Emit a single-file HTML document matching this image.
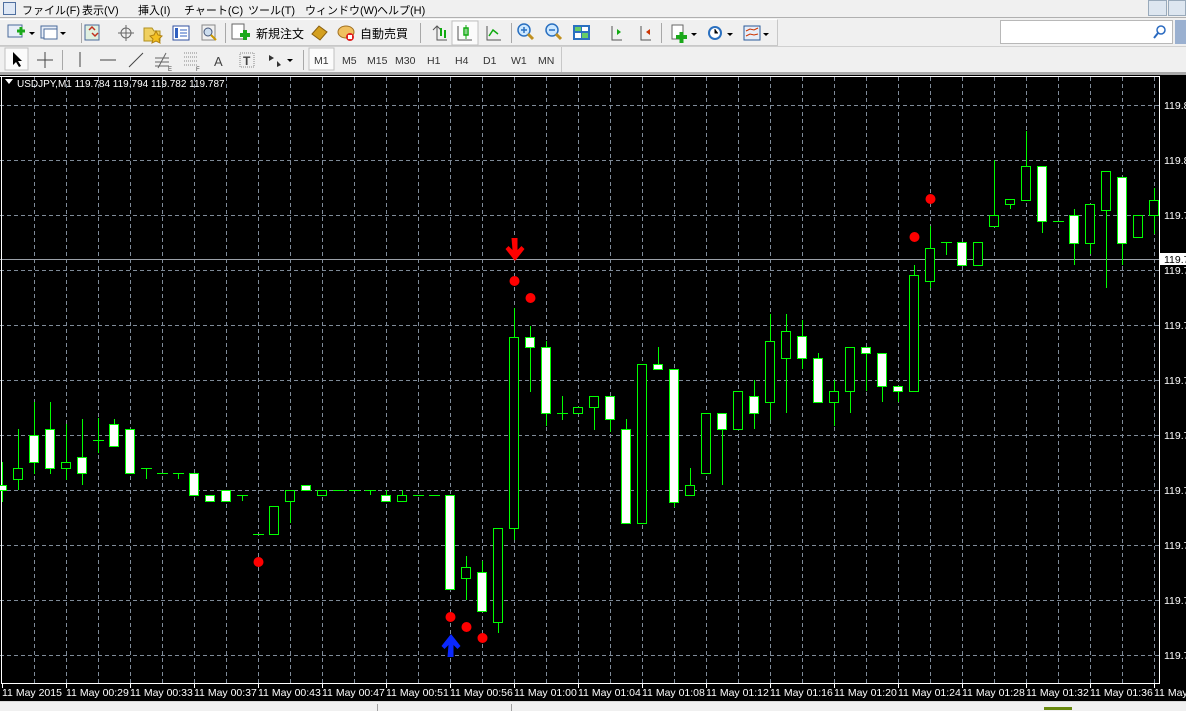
<!DOCTYPE html>
<html><head><meta charset="utf-8"><style>
*{margin:0;padding:0;box-sizing:border-box}
body{width:1186px;height:711px;overflow:hidden;background:#f0f0f0;font-family:"Liberation Sans","Noto Sans CJK JP",sans-serif;position:relative}
.menu{position:absolute;top:0;left:0;width:1186px;height:18px;font-size:11px;color:#000;border-bottom:1px solid #b0b0b0}
.menu span{position:absolute;top:2px;white-space:nowrap}
.tb{position:absolute;left:0;height:26px;border-top:1px solid #fff;border-bottom:1px solid #c8c8c8}
.sep{position:absolute;width:1px;background:#a8a8a8;height:20px}
.t{position:absolute;font-size:11px;color:#222}
</style></head><body>
<div class="menu">
<div style="position:absolute;left:3px;top:2px;width:13px;height:13px;border:1px solid #5070a0;background:#dfe8f5"></div>
<span style="left:22px">ファイル(F)</span><span style="left:82px">表示(V)</span><span style="left:138px">挿入(I)</span><span style="left:184px">チャート(C)</span><span style="left:248px">ツール(T)</span><span style="left:305px">ウィンドウ(W)</span><span style="left:377px">ヘルプ(H)</span>
<div style="position:absolute;left:1148px;top:0;width:19px;height:16px;border:1px solid #9ab;background:#dde6f0"></div>
<div style="position:absolute;left:1168px;top:0;width:18px;height:16px;border:1px solid #9ab;background:#dde6f0"></div>
</div>
<div class="tb" style="top:19px;width:778px;height:27px;border-right:1px solid #c8c8c8"></div>
<div class="tb" style="top:46px;width:562px;height:27px;border-right:1px solid #c8c8c8"></div>
<svg width="1186" height="75" style="position:absolute;left:0;top:0">
<rect x="8" y="25" width="14" height="12" fill="#e8eef8" stroke="#4a6a9a"/><path d="M17 31h8M21 27v8" stroke="#1aa81a" stroke-width="3"/><path d="M29 32l3 3 3-3z" fill="#000"/>
<rect x="41" y="26" width="16" height="12" fill="#e8eef8" stroke="#4a6a9a"/><rect x="44" y="29" width="13" height="10" fill="#fff" stroke="#4a6a9a"/><path d="M60 32l3 3 3-3z" fill="#000"/>
<rect x="85" y="25" width="14" height="15" fill="#e0f0e0" stroke="#4a6a9a"/><path d="M89 30l3-3 3 3M92 33l3 3 3-3" stroke="#c03020" stroke-width="1.5" fill="none"/>
<circle cx="126" cy="33" r="5" fill="none" stroke="#666"/><path d="M126 25v16M118 33h16" stroke="#666"/>
<path d="M144 28h8l2 3h6v10h-16z" fill="#f0d060" stroke="#b09020"/><path d="M156 31l2 4 4 1-3 3 1 4-4-2-4 2 1-4-3-3 4-1z" fill="#f4c020" stroke="#b08010"/>
<rect x="173" y="26" width="16" height="14" fill="#fff" stroke="#3050a0"/><rect x="175" y="28" width="3" height="10" fill="#3060c0"/><path d="M180 30h7M180 33h7M180 36h7" stroke="#3060c0"/>
<rect x="202" y="25" width="13" height="15" fill="#f0f0f0" stroke="#888"/><circle cx="208" cy="32" r="4" fill="#cde" stroke="#457"/><path d="M211 35l5 5" stroke="#c90" stroke-width="2"/>
<rect x="232" y="24" width="12" height="15" fill="#fff" stroke="#666"/><path d="M240 35h10M245 30v10" stroke="#1aa81a" stroke-width="4"/>
<path d="M312 34l7-8 8 6-7 8z" fill="#d4a020" stroke="#8a6010"/>
<ellipse cx="346" cy="32" rx="8" ry="6" fill="#f0c060" stroke="#a07020"/><circle cx="350" cy="37" r="4" fill="#e02020"/><rect x="348" y="35" width="4" height="4" fill="#fff"/>
<path d="M437 26v14h10M433 30l4-4 4 4" stroke="#555" fill="none"/><path d="M441 28v8M445 30v8" stroke="#1a1" stroke-width="2"/>
<rect x="452" y="21" width="26" height="24" fill="#fbfbfb" stroke="#c0c0c0"/><path d="M458 26v14h14" stroke="#555" fill="none"/><rect x="464" y="28" width="4" height="7" fill="none" stroke="#1a1" stroke-width="1.5"/><path d="M466 25v14" stroke="#1a1"/>
<path d="M487 26v14h14" stroke="#555" fill="none"/><path d="M489 36l4-6 5 4" stroke="#1a1" fill="none" stroke-width="1.5"/>
<circle cx="524" cy="30" r="6" fill="#cde8ff" stroke="#2a70c0" stroke-width="1.5"/><path d="M521 30h6M524 27v6" stroke="#2a70c0" stroke-width="1.5"/><path d="M528 34l5 5" stroke="#c09020" stroke-width="3"/>
<circle cx="552" cy="30" r="6" fill="#cde8ff" stroke="#2a70c0" stroke-width="1.5"/><path d="M549 30h6" stroke="#2a70c0" stroke-width="1.5"/><path d="M556 34l5 5" stroke="#c09020" stroke-width="3"/>
<rect x="573" y="25" width="17" height="15" fill="#2a70c0"/><rect x="575" y="27" width="6" height="4" fill="#6c6"/><rect x="582" y="27" width="6" height="4" fill="#fff"/><rect x="575" y="33" width="6" height="5" fill="#fff"/><rect x="582" y="33" width="6" height="5" fill="#6c6"/>
<path d="M612 26v14h10" stroke="#555" fill="none"/><path d="M617 29v6l4-3z" fill="#1a1"/>
<path d="M641 26v14h10" stroke="#555" fill="none"/><path d="M650 29v6l-4-3z" fill="#c30"/>
<rect x="672" y="25" width="11" height="14" fill="#fff" stroke="#666"/><path d="M676 37h11M681.5 32v11" stroke="#1aa81a" stroke-width="4"/><path d="M691 33l3 3 3-3z" fill="#000"/>
<circle cx="715" cy="33" r="7" fill="#2a70c0"/><circle cx="715" cy="33" r="5" fill="#fff"/><path d="M715 29v4h3" stroke="#000"/><path d="M727 33l3 3 3-3z" fill="#000"/>
<rect x="744" y="26" width="16" height="14" fill="#e8eef8" stroke="#2a5a9a"/><path d="M746 31l4-2 4 1 4-2M746 36l4-2 4 1 4-1" stroke="#c30" fill="none"/><path d="M763 33l3 3 3-3z" fill="#000"/>
<rect x="5" y="48" width="23" height="22" fill="#fbfbfb" stroke="#c0c0c0"/><path d="M13 52v13l3-3 3 5 2-1-3-5h4z" fill="#000"/>
<path d="M45 52v16M37 60h16" stroke="#444"/>
<path d="M80 52v15" stroke="#444"/><path d="M100 60h16" stroke="#444"/><path d="M129 67l14-14" stroke="#444"/>
<path d="M155 58h14M155 62h14M155 66h14M158 68l8-15" stroke="#666"/><text x="168" y="71" font-size="6" fill="#444">E</text>
<path d="M184 53h14M184 57h14M184 61h14M184 65h14" stroke="#888" stroke-dasharray="1 1"/><text x="196" y="71" font-size="6" fill="#444">F</text>
<text x="214" y="66" font-size="13" fill="#444">A</text>
<rect x="240" y="53" width="14" height="14" fill="none" stroke="#888" stroke-dasharray="1 1"/><text x="243" y="65" font-size="12" font-weight="bold" fill="#444">T</text>
<path d="M269 55l5 3-5 3zM277 61l4 4-4 2z" fill="#333"/><path d="M287 59l3 3 3-3z" fill="#000"/>
<rect x="309" y="48" width="25" height="22" fill="#fbfbfb" stroke="#c0c0c0"/>
<text font-size="10.5" fill="#333" y="64"><tspan x="314">M1</tspan><tspan x="342">M5</tspan><tspan x="367">M15</tspan><tspan x="395">M30</tspan><tspan x="427">H1</tspan><tspan x="455">H4</tspan><tspan x="483">D1</tspan><tspan x="511">W1</tspan><tspan x="538">MN</tspan></text>
</svg>
<div class="sep" style="left:81px;top:23px"></div><div class="sep" style="left:225px;top:23px"></div><div class="sep" style="left:420px;top:23px"></div><div class="sep" style="left:511px;top:23px"></div><div class="sep" style="left:661px;top:23px"></div>
<div class="sep" style="left:62px;top:50px"></div><div class="sep" style="left:303px;top:50px"></div>
<div style="position:absolute;top:46px;left:0;width:1186px;height:1px;background:#d0d0d0"></div>
<div class="t" style="left:256px;top:25px;font-size:12px;color:#000">新規注文</div>
<div class="t" style="left:360px;top:25px;font-size:12px;color:#000">自動売買</div>
<div style="position:absolute;left:1000px;top:20px;width:173px;height:24px;background:#fff;border:1px solid #b8b8b8"></div>
<svg width="14" height="14" style="position:absolute;left:1153px;top:25px"><circle cx="8" cy="5" r="4" fill="none" stroke="#2a6ac0" stroke-width="1.5"/><path d="M5 8l-4 5" stroke="#2a6ac0" stroke-width="2"/></svg>
<div style="position:absolute;left:1175px;top:20px;width:11px;height:24px;background:#9ab0d0"></div>
<div style="position:absolute;top:72px;left:0;width:1186px;height:3px;background:#a8a8a8"></div>

<svg width="1186" height="626" viewBox="0 75 1186 626" style="position:absolute;left:0;top:75px;background:#000;font-family:'Liberation Sans',sans-serif">
<g stroke="#7f8b99" stroke-dasharray="4 3">
<path d="M0 105.5H1159M0 160.5H1159M0 215.5H1159M0 270.5H1159M0 325.5H1159M0 380.5H1159M0 435.5H1159M0 490.5H1159M0 545.5H1159M0 600.5H1159M0 655.5H1159"/>
<path d="M34.5 77V683M66.5 77V683M98.5 77V683M130.5 77V683M162.5 77V683M194.5 77V683M226.5 77V683M258.5 77V683M290.5 77V683M322.5 77V683M354.5 77V683M386.5 77V683M418.5 77V683M450.5 77V683M482.5 77V683M514.5 77V683M546.5 77V683M578.5 77V683M610.5 77V683M642.5 77V683M674.5 77V683M706.5 77V683M738.5 77V683M770.5 77V683M802.5 77V683M834.5 77V683M866.5 77V683M898.5 77V683M930.5 77V683M962.5 77V683M994.5 77V683M1026.5 77V683M1058.5 77V683M1090.5 77V683M1122.5 77V683M1154.5 77V683"/>
</g>
<path d="M0 259.5H1159" stroke="#9aa0a8"/>
<path d="M0 76.5H1159.5V683.5H1.5V76" stroke="#fff" fill="none"/>
<path d="M2.5 683v5M66.5 683v5M130.5 683v5M194.5 683v5M258.5 683v5M322.5 683v5M386.5 683v5M450.5 683v5M514.5 683v5M578.5 683v5M642.5 683v5M706.5 683v5M770.5 683v5M834.5 683v5M898.5 683v5M962.5 683v5M1026.5 683v5M1090.5 683v5M1154.5 683v5M1159 105.5h4M1159 160.5h4M1159 215.5h4M1159 270.5h4M1159 325.5h4M1159 380.5h4M1159 435.5h4M1159 490.5h4M1159 545.5h4M1159 600.5h4M1159 655.5h4" stroke="#fff"/>
<g stroke="#00ff00" fill="none">
<path d="M2.5 462V502M18.5 429V490M34.5 402V474M50.5 402V474M66.5 424V480M82.5 419V485M98.5 418V453M114.5 419V446M130.5 429V474M146.5 468V479M178.5 473V479M242.5 495V501M290.5 490V523M370.5 490V495M386.5 490V501M402.5 490V501M466.5 556V600M482.5 561V611M498.5 528V633M514.5 308V540M530.5 326V392M546.5 341V426M562.5 396V420M594.5 396V430M610.5 396V432M626.5 419V523M658.5 347V369M674.5 369V507M690.5 468V495M722.5 413V485M754.5 380V429M770.5 314V420M786.5 314V413M802.5 320V369M818.5 353V402M834.5 380V426M850.5 347V413M866.5 347V391M882.5 353V402M898.5 386V402M914.5 265V391M930.5 226V288M946.5 242V255M994.5 160V226M1010.5 199V209M1026.5 131V200M1042.5 166V233M1074.5 209V265M1090.5 204V254M1106.5 171V288M1122.5 177V265M1154.5 188V234"/>
<path d="M93 440.5h11M141 468.5h11M157 473.5h11M173 473.5h11M237 495.5h11M253 534.5h11M333 490.5h11M349 490.5h11M365 490.5h11M413 495.5h11M429 495.5h11M557 413.5h11M941 242.5h11M1053 221.5h11"/>
</g>
<g stroke="#00ff00" fill="#fff">
<rect x="-2.5" y="485.5" width="9" height="5"/><rect x="29.5" y="435.5" width="9" height="27"/><rect x="45.5" y="429.5" width="9" height="39"/><rect x="77.5" y="457.5" width="9" height="16"/><rect x="109.5" y="424.5" width="9" height="22"/><rect x="125.5" y="429.5" width="9" height="44"/><rect x="189.5" y="473.5" width="9" height="22"/><rect x="205.5" y="495.5" width="9" height="6"/><rect x="221.5" y="490.5" width="9" height="11"/><rect x="301.5" y="485.5" width="9" height="5"/><rect x="381.5" y="495.5" width="9" height="6"/><rect x="445.5" y="495.5" width="9" height="94"/><rect x="477.5" y="572.5" width="9" height="39"/><rect x="525.5" y="337.5" width="9" height="10"/><rect x="541.5" y="347.5" width="9" height="66"/><rect x="605.5" y="396.5" width="9" height="23"/><rect x="621.5" y="429.5" width="9" height="94"/><rect x="653.5" y="364.5" width="9" height="5"/><rect x="669.5" y="369.5" width="9" height="133"/><rect x="717.5" y="413.5" width="9" height="16"/><rect x="749.5" y="396.5" width="9" height="17"/><rect x="797.5" y="336.5" width="9" height="22"/><rect x="813.5" y="358.5" width="9" height="44"/><rect x="861.5" y="347.5" width="9" height="6"/><rect x="877.5" y="353.5" width="9" height="33"/><rect x="893.5" y="386.5" width="9" height="5"/><rect x="957.5" y="242.5" width="9" height="23"/><rect x="1037.5" y="166.5" width="9" height="55"/><rect x="1069.5" y="215.5" width="9" height="28"/><rect x="1117.5" y="177.5" width="9" height="66"/>
</g>
<g stroke="#00ff00" fill="#000">
<rect x="13.5" y="468.5" width="9" height="11"/><rect x="61.5" y="462.5" width="9" height="6"/><rect x="269.5" y="506.5" width="9" height="28"/><rect x="285.5" y="490.5" width="9" height="11"/><rect x="317.5" y="490.5" width="9" height="5"/><rect x="397.5" y="495.5" width="9" height="6"/><rect x="461.5" y="567.5" width="9" height="11"/><rect x="493.5" y="528.5" width="9" height="94"/><rect x="509.5" y="337.5" width="9" height="191"/><rect x="573.5" y="407.5" width="9" height="6"/><rect x="589.5" y="396.5" width="9" height="11"/><rect x="637.5" y="364.5" width="9" height="159"/><rect x="685.5" y="485.5" width="9" height="10"/><rect x="701.5" y="413.5" width="9" height="60"/><rect x="733.5" y="391.5" width="9" height="38"/><rect x="765.5" y="341.5" width="9" height="61"/><rect x="781.5" y="331.5" width="9" height="27"/><rect x="829.5" y="391.5" width="9" height="11"/><rect x="845.5" y="347.5" width="9" height="44"/><rect x="909.5" y="275.5" width="9" height="116"/><rect x="925.5" y="248.5" width="9" height="33"/><rect x="973.5" y="242.5" width="9" height="23"/><rect x="989.5" y="215.5" width="9" height="11"/><rect x="1005.5" y="199.5" width="9" height="5"/><rect x="1021.5" y="166.5" width="9" height="34"/><rect x="1085.5" y="204.5" width="9" height="39"/><rect x="1101.5" y="171.5" width="9" height="39"/><rect x="1133.5" y="215.5" width="9" height="22"/><rect x="1149.5" y="200.5" width="9" height="15"/>
</g>
<rect x="1159" y="77" width="27" height="606" fill="#000"/>
<path d="M1159.5 76V683.5" stroke="#fff"/>
<g fill="#ff0000"><circle cx="258.5" cy="562" r="5"/><circle cx="450.5" cy="617" r="5"/><circle cx="466.5" cy="627" r="5"/><circle cx="482.5" cy="638" r="5"/><circle cx="514.5" cy="281" r="5"/><circle cx="530.5" cy="298" r="5"/><circle cx="914.5" cy="237" r="5"/><circle cx="930.5" cy="199" r="5"/>
<path d="M511.5 238h6v12l4-4 3 3-9.5 12-9.5-12 3-3 4 4z"/></g>
<path d="M447.5 657h6v-12l4 4 3-3-9.5-12-9.5 12 3 3 4-4z" fill="#0a28ff"/>
<g fill="#fff" font-size="10.5">
<text x="1164" y="109">119.815</text><text x="1164" y="164">119.810</text><text x="1164" y="219">119.795</text><text x="1164" y="274">119.790</text><text x="1164" y="329">119.785</text><text x="1164" y="384">119.780</text><text x="1164" y="439">119.775</text><text x="1164" y="494">119.770</text><text x="1164" y="549">119.765</text><text x="1164" y="604">119.760</text><text x="1164" y="659">119.755</text>
</g>
<rect x="1160" y="253" width="26" height="12" fill="#fff"/><text x="1164" y="263" font-size="10.5" fill="#000">119.787</text>
<text y="696" fill="#fff" font-size="10.5"><tspan x="2">11 May 2015</tspan><tspan x="66">11 May 00:29</tspan><tspan x="130">11 May 00:33</tspan><tspan x="194">11 May 00:37</tspan><tspan x="258">11 May 00:43</tspan><tspan x="322">11 May 00:47</tspan><tspan x="386">11 May 00:51</tspan><tspan x="450">11 May 00:56</tspan><tspan x="514">11 May 01:00</tspan><tspan x="578">11 May 01:04</tspan><tspan x="642">11 May 01:08</tspan><tspan x="706">11 May 01:12</tspan><tspan x="770">11 May 01:16</tspan><tspan x="834">11 May 01:20</tspan><tspan x="898">11 May 01:24</tspan><tspan x="962">11 May 01:28</tspan><tspan x="1026">11 May 01:32</tspan><tspan x="1090">11 May 01:36</tspan><tspan x="1154">11 May</tspan></text>
<path d="M5 79l4 5 4-5z" fill="#fff"/>
<text x="17" y="87" fill="#fff" font-size="10">USDJPY,M1  119.784 119.794 119.782 119.787</text>
</svg>
<div style="position:absolute;top:701px;left:0;width:1186px;height:10px;background:#f0f0f0;border-top:1px solid #d8d8d8"></div>
<div style="position:absolute;top:704px;left:377px;width:1px;height:7px;background:#a0a0a0"></div>
<div style="position:absolute;top:704px;left:511px;width:1px;height:7px;background:#a0a0a0"></div>
<div style="position:absolute;top:707px;left:1044px;width:28px;height:3px;background:#6a8a10"></div>
</body></html>
